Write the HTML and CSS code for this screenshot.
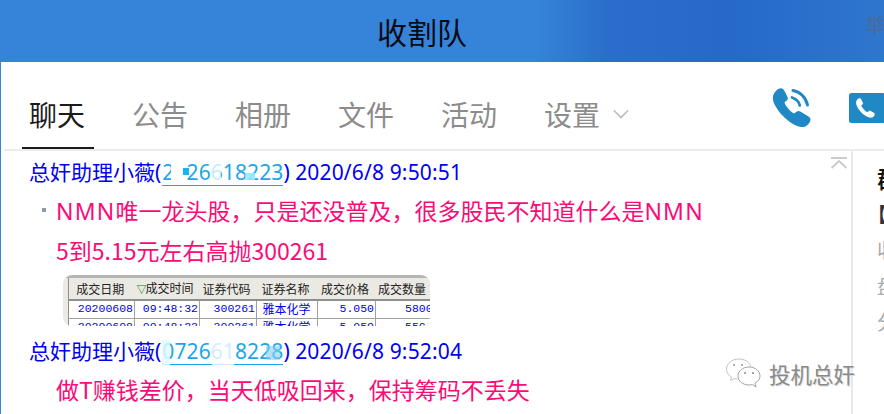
FILE: index.html
```html
<!DOCTYPE html>
<html lang="zh">
<head>
<meta charset="utf-8">
<title>收割队</title>
<link rel="stylesheet" href="styles.css">
</head>
<body>
<div class="app">
  <header class="header">
    <h1 class="title">收割队</h1>
    <span class="report">举报</span>
  </header>
  <main class="panel">
    <nav class="tabs">
      <div class="tab active">聊天</div>
      <div class="tab">公告</div>
      <div class="tab">相册</div>
      <div class="tab">文件</div>
      <div class="tab">活动</div>
      <div class="tab">设置</div>
      <svg class="chevron" viewBox="0 0 16 10"><path d="M1 1.5 8 8.5 15 1.5" fill="none" stroke="#bbb" stroke-width="1.6"/></svg>
      <div class="calls">
        <svg class="call-voice" viewBox="0 0 40 40"><path d="M8 .5C10 0 11.5 1 12.500 3L15.500 9C16.200 10.500 15.800 11.800 14.500 12.800L12.500 14.300C13.500 18 17.500 23 22 25.500L24.500 23.700C25.800 22.800 27 22.800 28.300 23.600L36.500 28.500C38.500 29.800 39 31.500 38 33.500C36.500 37 33 39.500 29 39C19 37.500 5.500 24.500 1.500 14C0 10 1 6 4 2.800C5.200 1.600 6.500.8 8 .5Z" fill="#2088c4"/><path d="M20 9.500C24 10.800 27 14 27.800 17.500" fill="none" stroke="#2088c4" stroke-width="2.800" stroke-linecap="round"/><path d="M21 2.500C28 3.500 33.800 9.500 35.500 17" fill="none" stroke="#2088c4" stroke-width="3" stroke-linecap="round"/></svg>
        <svg class="call-video" viewBox="0 0 36 30"><rect width="36" height="30" rx="2.500" fill="#2088c4"/><path d="M9.500 5.500C11 5 11.800 5.500 12.300 6.500L13.800 9.500C14.200 10.400 13.900 11.200 13.200 11.800L12.200 12.600C13.500 15.500 15.500 17.700 18.300 19.300L19.500 18.300C20.300 17.700 21 17.700 21.800 18.100L24.800 19.800C25.800 20.400 26 21.400 25.400 22.400C24.400 24.200 22.500 25 20.500 24.500C14.500 23 8.500 16.500 7.200 11C6.700 8.700 7.600 6.500 9.500 5.500Z" fill="#fff"/></svg>
      </div>
    </nav>
    <div class="content">
      <section class="chat">
        <svg class="collapse" viewBox="0 0 18 12"><path d="M1 1H17" stroke="#ccc" stroke-width="2"/><path d="M1.500 11 9 4 16.500 11" fill="none" stroke="#ccc" stroke-width="2"/></svg>
        <p class="sender">总奸助理小薇(<span class="qq">2126618223<i class="mask mask-a"></i><i class="mask mask-b"></i><i class="mask mask-c"></i><i class="mask mask-d"></i></span>) <span class="date">2020/6/8 9:50:51</span></p>
        <div class="message first">
          <p><span class="latin">NMN</span>唯一龙头股，只是还没普及，很多股民不知道什么是<span class="latin">NMN</span></p>
          <p>5到5.15元左右高抛300261</p>
          <div class="shot">
            <table class="trades">
              <colgroup>
                <col class="c1"><col class="c2"><col class="c3"><col class="c4"><col class="c5"><col class="c6">
              </colgroup>
              <thead>
                <tr><th>成交日期</th><th class="sorted"><span class="sort">▽</span>成交时间</th><th>证券代码</th><th>证券名称</th><th>成交价格</th><th>成交数量</th></tr>
              </thead>
              <tbody>
                <tr><td>20200608</td><td>09:48:32</td><td>300261</td><td class="name">雅本化学</td><td>5.050</td><td>5800</td></tr>
                <tr><td>20200608</td><td>09:48:23</td><td>300261</td><td class="name">雅本化学</td><td>5.050</td><td>5500</td></tr>
              </tbody>
            </table>
          </div>
        </div>
        <p class="sender">总奸助理小薇(<span class="qq">0726618228<i class="mask mask-e"></i><i class="mask mask-f"></i><i class="mask mask-g"></i></span>) <span class="date">2020/6/8 9:52:04</span></p>
        <div class="message">
          <p>做T赚钱差价，当天低吸回来，保持筹码不丢失</p>
        </div>
      </section>
      <aside class="side">
        <p class="side-title">群公告</p>
        <p class="side-bold">【本群</p>
        <p>收盘</p>
        <p>盘中</p>
        <p>分享</p>
      </aside>
    </div>
    <div class="watermark">
      <svg class="wechat" viewBox="0 0 36 32"><path d="M14 1C7 1 1.500 5.500 1.500 11C1.500 14.500 3.500 17.300 6.500 19.200L5.500 22.500L9.500 20.500C10.500 20.800 11.500 21 12.500 21" fill="none" stroke="#bbb" stroke-width=".9"/><path d="M14 1C19.500 1 24.500 4 25.800 8.500" fill="none" stroke="#bbb" stroke-width=".9"/><path d="M24 9C17.800 9 13 13 13 18S17.800 27 24 27C25.200 27 26.300 26.800 27.300 26.500L31 29L30 25.300C33 23.600 35 21 35 18C35 13 30.200 9 24 9Z" fill="#fff" stroke="#999" stroke-width=".9"/><circle cx="9" cy="7" r="1" fill="#999"/><circle cx="17" cy="7" r="1" fill="#999"/><circle cx="20" cy="15" r="1" fill="#888"/><circle cx="28" cy="15" r="1" fill="#888"/></svg>
      <span class="mark-text">投机总奸</span>
    </div>
  </main>
</div>
</body>
</html>
```
FILE: styles.css
```css
* { box-sizing: border-box; }
html, body { margin: 0; padding: 0; background: #fff; }
body { font-family: "Noto Sans CJK SC", "Noto Sans", sans-serif; }
p { margin: 0; }

.app {
  width: 884px;
  height: 414px;
  overflow: hidden;
  display: flex;
  flex-direction: column;
}

.header {
  height: 62px;
  flex: none;
  display: flex;
  align-items: center;
  background: linear-gradient(90deg, #3584d9 0, #3584d9 535px, #2a6dca 610px, #2669c8 730px, #2f76cf 884px);
  padding-left: 377px;
  overflow: hidden;
}
.title {
  margin: 0;
  font-size: 30px;
  font-weight: 400;
  line-height: 1;
  color: #0a0a12;
  white-space: nowrap;
}
.report {
  margin-left: 398px;
  margin-top: -12px;
  font-size: 20px;
  line-height: 1;
  color: #4a6a98;
  white-space: nowrap;
}

.panel {
  position: relative;
  flex: 1;
  min-height: 0;
  display: flex;
  flex-direction: column;
  border-left: 1px solid #3584d9;
}

.tabs {
  height: 89px;
  flex: none;
  margin-left: 3px;
  padding: 0 0 0 18px;
  display: flex;
  align-items: flex-end;
  gap: 31px;
  border-bottom: 2px solid #ececec;
}
.tab {
  width: 72px;
  height: 64px;
  padding-right: 2px;
  text-align: center;
  font-size: 28px;
  line-height: 59px;
  color: #8c8c8c;
  flex: none;
}
.tab.active {
  color: #1c1c1c;
  border-bottom: 2px solid #1a1a1a;
}
.chevron {
  width: 16px;
  height: 10px;
  align-self: flex-end;
  margin: 0 0 30px -27px;
  flex: none;
}
.calls {
  display: flex;
  align-items: center;
  gap: 37px;
  margin: 0 0 21px 112px;
  flex: none;
}
.call-voice { width: 40px; height: 40px; display: block; flex: none; }
.call-video { width: 36px; height: 30px; display: block; flex: none; }

.content {
  flex: 1;
  min-height: 0;
  display: flex;
}
.chat {
  position: relative;
  flex: 1;
  min-width: 0;
  padding: 6px 0 0 28px;
  overflow: hidden;
}
.collapse {
  position: absolute;
  top: 6px;
  right: 3px;
  width: 18px;
  height: 12px;
}
.sender {
  font-family: "Noto Sans", "Noto Sans CJK SC", sans-serif;
  font-size: 21px;
  line-height: 30px;
  color: #0000f5;
  white-space: nowrap;
}
.date { letter-spacing: .15px; }
.qq {
  position: relative;
  display: inline-block;
  margin-left: 1px;
  line-height: 26px;
  letter-spacing: .1px;
  color: #1aa7e8;
  border-bottom: 1px solid #1aa7e8;
}
.mask { position: absolute; display: block; }
.mask-a { left: 9px; top: 2px; width: 14px; height: 20px; background: #fff; }
.mask-b { left: 21px; top: 9px; width: 6px; height: 7px; background: #14b4f5; }
.mask-c { left: 50px; top: 4px; width: 9px; height: 18px; background: rgba(255,255,255,.75); }
.mask-d { left: 83px; top: 14px; width: 10px; height: 7px; background: rgba(150,235,250,.9); }
.mask-e { left: 0; top: 2px; width: 8px; height: 25px; background: rgba(225,250,255,.85); }
.mask-f { left: 50px; top: 3px; width: 22px; height: 24px; background: rgba(255,255,255,.8); }
.mask-g { left: 104px; top: 8px; width: 14px; height: 14px; background: rgba(130,205,240,.6); }

.message {
  position: relative;
  padding: 4px 0 0 27px;
  font-size: 23px;
  line-height: 39px;
  color: #fc0a78;
  white-space: nowrap;
}
.latin { font-family: "Noto Sans", sans-serif; letter-spacing: 1.2px; }
.message.first::before {
  content: "";
  position: absolute;
  left: 13px;
  top: 21px;
  width: 4px;
  height: 4px;
  background: #8f9aa3;
}
.shot {
  width: 367px;
  height: 51px;
  margin: 5px 0 10px 7px;
  padding: 3px 0 0 5px;
  overflow: hidden;
  border-radius: 9px;
  background: linear-gradient(#b5b5b5 0, #b5b5b5 3px, #ebe9e3 3px);
}
.trades {
  width: 363px;
  table-layout: fixed;
  border-collapse: collapse;
  background: #fff;
  font-family: "Noto Sans CJK SC", sans-serif;
}
.c1 { width: 66px; }
.c2 { width: 65px; }
.c3 { width: 57px; }
.c4 { width: 61px; }
.c5 { width: 58px; }
.c6 { width: 56px; }
.trades th {
  height: 21px;
  padding: 0 3px 0 0;
  font-size: 12px;
  font-weight: 400;
  line-height: 20px;
  color: #222;
  background: #ebe9e3;
  border-bottom: 2px solid #8e8e8e;
  text-align: center;
  white-space: nowrap;
  overflow: hidden;
}
.trades th.sorted { padding: 0 0 0 2px; text-align: left; }
.trades th:first-child, .trades td:first-child { border-left: 1px solid #8e8e8e; }
.sort { display: inline-block; width: 9px; color: #0a7a2a; font-size: 10px; font-weight: 700; }
.trades td {
  height: 18px;
  padding: 0 1px 0 0;
  font-family: "Liberation Mono", monospace;
  font-size: 11.500px;
  line-height: 16px;
  color: #0000f0;
  text-align: right;
  border-right: 1px solid #a0a0a0;
  border-bottom: 1px solid #a0a0a0;
  overflow: hidden;
  white-space: nowrap;
}
.trades td.name {
  font-family: "Noto Sans CJK SC", sans-serif;
  font-size: 12px;
  text-align: center;
}
.trades td:last-child { border-right: 0; text-align: left; padding-left: 29px; }

.side {
  width: 33px;
  flex: none;
  border-left: 2px solid #e9e9e9;
  padding: 9px 0 0 24px;
  overflow: hidden;
  font-size: 20px;
  line-height: 36px;
  color: #aaa;
  white-space: nowrap;
}
.side-title { color: #111; font-size: 24px; font-weight: 500; }
.side-bold { color: #333; font-weight: 700; margin-left: -10px; }

.watermark {
  position: absolute;
  left: 724px;
  top: 296px;
  display: flex;
  align-items: center;
  gap: 8px;
}
.wechat { width: 36px; height: 32px; display: block; flex: none; }
.mark-text {
  font-size: 21.500px;
  line-height: 30px;
  color: #8a8a8a;
  text-shadow: 1px 1px 0 #ddd;
  white-space: nowrap;
}
```
